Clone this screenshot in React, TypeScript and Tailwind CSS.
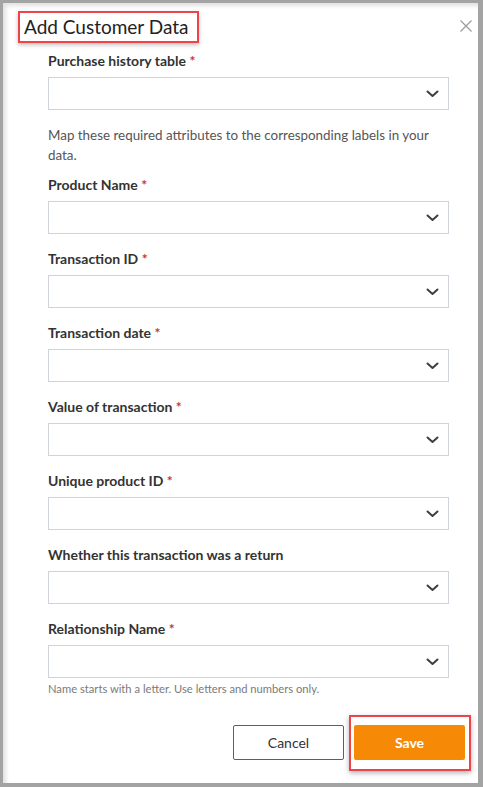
import React from "react";

const fields: { label: string; required: boolean }[] = [
  { label: "Product Name", required: true },
  { label: "Transaction ID", required: true },
  { label: "Transaction date", required: true },
  { label: "Value of transaction", required: true },
  { label: "Unique product ID", required: true },
  { label: "Whether this transaction was a return", required: false },
];

function Chevron() {
  return (
    <svg width="13" height="8" viewBox="0 0 13 8" fill="none">
      <path d="M1.5 1.5 L6.5 6 L11.5 1.5" stroke="#3f3f3f" strokeWidth="2" strokeLinecap="round" strokeLinejoin="round" />
    </svg>
  );
}

function Label({ text, required }: { text: string; required: boolean }) {
  return (
    <div className="h-[18px] text-[14px] leading-[18px] font-bold text-[#333333]">
      {text}
      {required && <span className="text-[#c23a2f]"> *</span>}
    </div>
  );
}

function Select() {
  return (
    <div className="h-[33px] border border-[#cfd3da] bg-white flex items-center justify-end pr-[9px]">
      <Chevron />
    </div>
  );
}

export default function App() {
  return (
    <div
      className="w-[483px] h-[787px] bg-[#a3a3a3] pl-[3px] pt-[3px] pr-[5px] pb-[4px]"
      style={{ fontFamily: "Lato, 'Open Sans', sans-serif" }}
    >
      <div className="relative w-full h-full bg-white shadow-[inset_3px_3px_4px_rgba(0,0,0,0.12)] pt-[8px]">
        <div className="absolute right-[6px] top-[17px] w-[12px] h-[12px]">
          <svg width="12" height="12" viewBox="0 0 12 12">
            <path d="M0.5 0.5 L11.5 11.5 M11.5 0.5 L0.5 11.5" stroke="#9a9a9a" strokeWidth="1.2" />
          </svg>
        </div>
        <div className="ml-[15px] inline-flex items-center h-[32px] border-2 border-[#ef4249] pl-[4px] pr-[8px] shadow-[0_2px_4px_rgba(0,0,0,0.25)]">
          <span className="text-[19px] leading-[24px] text-[#222222]">Add Customer Data</span>
        </div>
        <div className="pl-[45px] pr-[29px] pt-[9px]">
          <Label text="Purchase history table" required />
          <div className="mt-[7px]">
            <Select />
          </div>
          <p className="mt-[15px] text-[13.4px] leading-[20px] text-[#555555]">
            Map these required attributes to the corresponding labels in your data.
          </p>
          <div className="mt-[11px] flex flex-col gap-[16px]">
            {fields.map((f) => (
              <div key={f.label} className="flex flex-col gap-[7px]">
                <Label text={f.label} required={f.required} />
                <Select />
              </div>
            ))}
            <div className="flex flex-col">
              <Label text="Relationship Name" required />
              <div className="mt-[7px]">
                <Select />
              </div>
              <div className="mt-[3px] text-[11.2px] leading-[16px] text-[#7a7a7a]">
                Name starts with a letter. Use letters and numbers only.
              </div>
            </div>
          </div>
        </div>
        <div className="flex justify-end items-start pr-[7px] mt-[18px]">
          <button className="mt-[10px] w-[111px] h-[35px] border border-[#5f5f5f] rounded-[2px] text-[14px] text-[#333333] bg-white">
            Cancel
          </button>
          <div className="ml-[5px] border-2 border-[#ef4249] pl-[3px] pr-[4px] pt-[8px] pb-[9px] shadow-[0_2px_5px_rgba(0,0,0,0.3)]">
            <button className="w-[111px] h-[35px] rounded-[2px] bg-[#f68a06] text-white font-bold text-[14px]">
              Save
            </button>
          </div>
        </div>
      </div>
    </div>
  );
}
